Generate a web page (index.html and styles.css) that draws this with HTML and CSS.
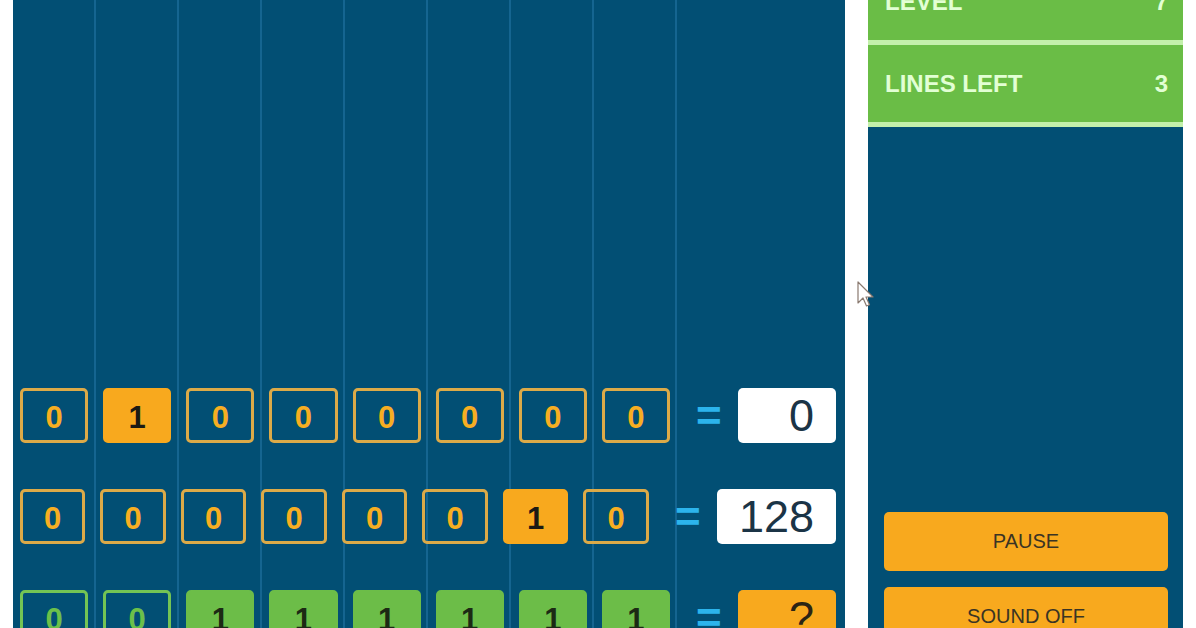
FILE: index.html
```html
<!DOCTYPE html>
<html lang="en">
<head>
<meta charset="utf-8">
<title>Binary Game</title>
<link rel="stylesheet" href="styles.css">
</head>
<body>
<div class="app">
  <main class="board">
    <div class="cols">
      <div class="col"></div><div class="col"></div><div class="col"></div><div class="col"></div>
      <div class="col"></div><div class="col"></div><div class="col"></div><div class="col"></div>
      <div class="col last"></div>
    </div>
    <div class="rows">
      <div class="row">
        <div class="bits">
          <div class="bit">0</div><div class="bit on">1</div><div class="bit">0</div><div class="bit">0</div>
          <div class="bit">0</div><div class="bit">0</div><div class="bit">0</div><div class="bit">0</div>
        </div>
        <div class="eq">=</div>
        <div class="ans">0</div>
      </div>
      <div class="row">
        <div class="bits">
          <div class="bit">0</div><div class="bit">0</div><div class="bit">0</div><div class="bit">0</div>
          <div class="bit">0</div><div class="bit">0</div><div class="bit on">1</div><div class="bit">0</div>
        </div>
        <div class="eq">=</div>
        <div class="ans">128</div>
      </div>
      <div class="row green">
        <div class="bits">
          <div class="bit">0</div><div class="bit">0</div><div class="bit on">1</div><div class="bit on">1</div>
          <div class="bit on">1</div><div class="bit on">1</div><div class="bit on">1</div><div class="bit on">1</div>
        </div>
        <div class="eq">=</div>
        <div class="ans ask">?</div>
      </div>
    </div>
  </main>
  <aside class="panel">
    <div class="stat"><span>LEVEL</span><span>7</span></div>
    <div class="stat"><span>LINES LEFT</span><span>3</span></div>
    <div class="controls">
      <button class="btn">PAUSE</button>
      <button class="btn">SOUND OFF</button>
    </div>
  </aside>
</div>
<svg class="cursor" width="20" height="28" viewBox="0 0 20 28" aria-hidden="true">
  <path d="M1 1 L1 22 L6 17 L9.5 25 L12.5 23.8 L9 16 L16 16 Z" fill="#ffffff" stroke="#8a7a70" stroke-width="1.2" stroke-linejoin="round"/>
</svg>
</body>
</html>
```
FILE: styles.css
```css
html, body {
  margin: 0;
  padding: 0;
  background: #ffffff;
}
body {
  height: 628px;
  overflow: hidden;
  position: relative;
  font-family: "Liberation Sans", Arial, sans-serif;
}
.app {
  display: flex;
  gap: 23px;
  padding: 0 13px;
  height: 697px;
  margin-top: -37px;
}
.board {
  flex: 1;
  display: grid;
  background: #024f74;
}
.cols {
  grid-area: 1 / 1;
  display: flex;
}
.col {
  width: 83px;
  box-sizing: border-box;
  border-right: 2px solid #156590;
}
.col.last {
  flex: 1;
  border-right: none;
}
.rows {
  grid-area: 1 / 1;
  align-self: end;
  display: flex;
  flex-direction: column;
  gap: 46px;
  padding: 0 9px 15px 7px;
  position: relative;
}
.row {
  display: flex;
  align-items: center;
  height: 55px;
}
.bits {
  flex: 1;
  display: flex;
  gap: 15px;
  height: 100%;
}
.bit {
  flex: 1 1 0;
  box-sizing: border-box;
  border: 3px solid #dcaa48;
  border-radius: 5px;
  display: flex;
  align-items: center;
  justify-content: center;
  padding-top: 5px;
  color: #f7ae22;
  font-weight: bold;
  font-size: 31px;
}
.bit.on {
  background: #f8a91e;
  border-color: #f8a91e;
  color: #1c1a14;
}
.green .bit {
  border-color: #74c454;
  color: #6cc04a;
}
.green .bit.on {
  background: #6cbd48;
  border-color: #6cbd48;
  color: #1c2a14;
}
.eq {
  width: 25px;
  margin: 0 17px 0 26px;
  color: #2cb4ec;
  font-weight: bold;
  font-size: 44px;
  line-height: 1;
  text-align: center;
}
.ans {
  min-width: 98px;
  height: 100%;
  box-sizing: border-box;
  padding: 0 22px;
  background: #ffffff;
  border-radius: 5px;
  display: flex;
  align-items: center;
  justify-content: flex-end;
  color: #1b3446;
  font-size: 45px;
}
.ans.ask {
  background: #f8a91e;
  color: #2b2414;
}
.panel {
  width: 315px;
  display: flex;
  flex-direction: column;
  background: #024f74;
}
.stat {
  height: 77px;
  border-bottom: 5px solid #c3f0ab;
  background: #6abd46;
  display: flex;
  align-items: center;
  justify-content: space-between;
  padding: 0 15px 0 17px;
  color: #e2ffd4;
  font-weight: bold;
  font-size: 24px;
}
.controls {
  margin-top: auto;
  display: flex;
  flex-direction: column;
  gap: 16px;
  padding: 0 15px 14px 16px;
}
.btn {
  height: 59px;
  border: none;
  border-radius: 5px;
  background: #f8a91e;
  color: #3a3424;
  font-family: "Liberation Sans", Arial, sans-serif;
  font-size: 20px;
  padding: 0;
}
.cursor {
  position: absolute;
  left: 857px;
  top: 281px;
}
```
